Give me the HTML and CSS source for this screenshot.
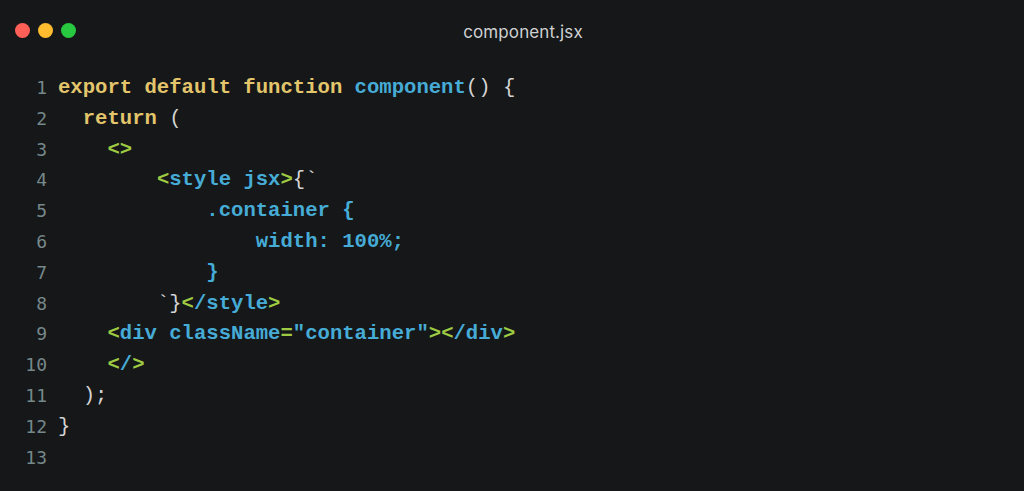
FILE: index.html
```html
<!DOCTYPE html>
<html lang="en">
<head>
<meta charset="utf-8">
<title>component.jsx</title>
<link rel="stylesheet" href="styles.css">
</head>
<body>
<div class="window">
  <div class="titlebar">
    <div class="lights">
      <span class="dot red"></span>
      <span class="dot yellow"></span>
      <span class="dot green"></span>
    </div>
    <div class="title">component.jsx</div>
  </div>
  <div class="code">
    <div class="line"><span class="num">1</span><span class="src"><span class="k">export default function</span> <span class="b">component</span><span class="w">() {</span></span></div>
    <div class="line"><span class="num">2</span><span class="src">  <span class="k">return</span> <span class="w">(</span></span></div>
    <div class="line"><span class="num">3</span><span class="src">    <span class="g">&lt;&gt;</span></span></div>
    <div class="line"><span class="num">4</span><span class="src">        <span class="g">&lt;</span><span class="b">style jsx</span><span class="g">&gt;</span><span class="w">{`</span></span></div>
    <div class="line"><span class="num">5</span><span class="src">            <span class="b">.container {</span></span></div>
    <div class="line"><span class="num">6</span><span class="src">                <span class="b">width: 100%;</span></span></div>
    <div class="line"><span class="num">7</span><span class="src">            <span class="b">}</span></span></div>
    <div class="line"><span class="num">8</span><span class="src">        <span class="w">`}</span><span class="g">&lt;</span><span class="b">/style</span><span class="g">&gt;</span></span></div>
    <div class="line"><span class="num">9</span><span class="src">    <span class="g">&lt;</span><span class="b">div className</span><span class="g">=</span><span class="b">"container"</span><span class="g">&gt;&lt;</span><span class="b">/div</span><span class="g">&gt;</span></span></div>
    <div class="line"><span class="num">10</span><span class="src">    <span class="g">&lt;</span><span class="b">/</span><span class="g">&gt;</span></span></div>
    <div class="line"><span class="num">11</span><span class="src">  <span class="w">);</span></span></div>
    <div class="line"><span class="num">12</span><span class="src"><span class="w">}</span></span></div>
    <div class="line"><span class="num">13</span><span class="src"></span></div>
  </div>
</div>
</body>
</html>
```

FILE: styles.css
```css
html, body {
  margin: 0;
  padding: 0;
  background: #151719;
}
.window {
  width: 1024px;
  height: 491px;
  background: #151719;
  overflow: hidden;
}
.titlebar {
  position: relative;
  height: 62px;
  display: flex;
  align-items: center;
}
.lights {
  display: flex;
  gap: 8px;
  padding-left: 15px;
  margin-top: -2px;
}
.dot {
  width: 15px;
  height: 15px;
  border-radius: 50%;
  display: block;
}
.red { background: #fe5f57; }
.yellow { background: #febc2e; }
.green { background: #28c840; }
.title {
  position: absolute;
  left: 0;
  right: 0;
  top: 22px;
  text-align: center;
  padding-left: 22px;
  font-family: Inter, "Noto Sans", sans-serif;
  font-size: 17px;
  color: #cfd0d1;
  letter-spacing: 0.1px;
}
.code {
  padding-top: 11px;
  font-family: "Liberation Mono", monospace;
  font-size: 20.6px;
  font-weight: bold;
}
.line {
  display: flex;
  height: 30.8px;
  line-height: 30.8px;
  white-space: pre;
}
.num {
  width: 47px;
  text-align: right;
  color: #75888a;
  font-family: "DejaVu Sans Mono", monospace;
  font-weight: normal;
  font-size: 18px;
  flex: none;
}
.src {
  padding-left: 11px;
}
.k { color: #e3c56c; }
.b { color: #46acd6; }
.g { color: #9fcb43; }
.w { color: #d4d4d4; font-weight: normal; }
```
